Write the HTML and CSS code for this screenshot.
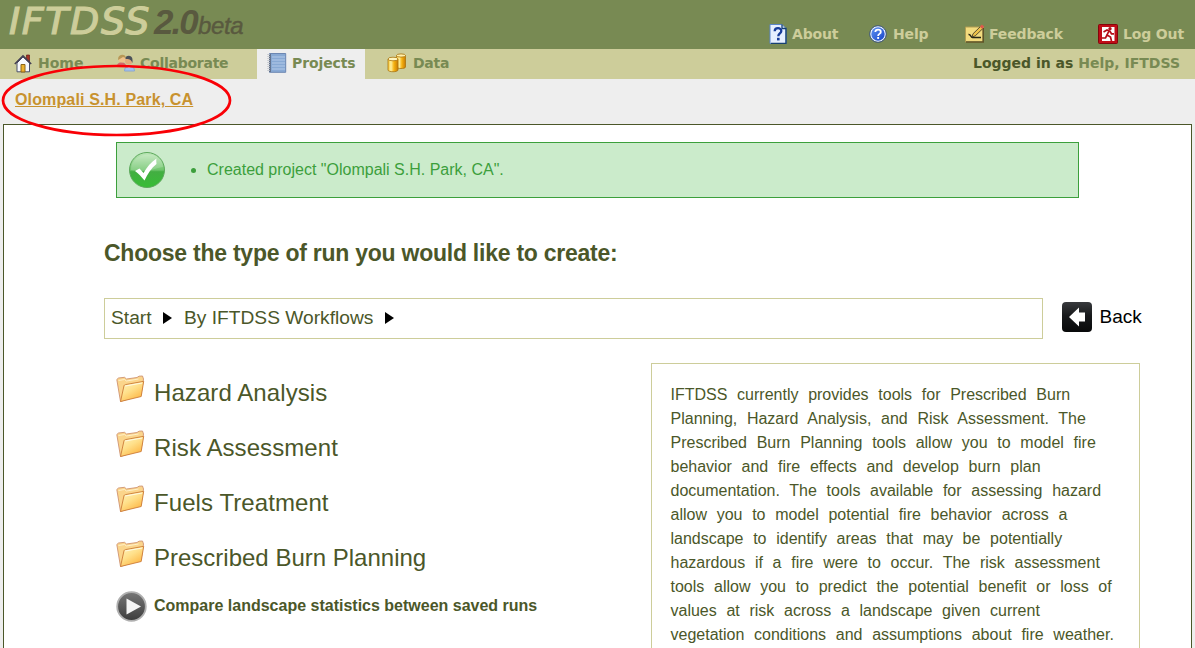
FILE: index.html
```html
<!DOCTYPE html>
<html lang="en">
<head>
<meta charset="utf-8">
<title>IFTDSS 2.0 beta</title>
<link rel="stylesheet" href="styles.css">
</head>
<body>
<svg class="defs" width="0" height="0" aria-hidden="true">
  <defs>
    <linearGradient id="gold" x1="0" y1="0" x2=".7" y2="1"><stop offset="0" stop-color="#fff6c4"/><stop offset=".5" stop-color="#ffe08a"/><stop offset="1" stop-color="#fdb440"/></linearGradient>
    <linearGradient id="barrel" x1="0" y1="0" x2="1" y2="0"><stop offset="0" stop-color="#f8c832"/><stop offset=".3" stop-color="#fff0a0"/><stop offset=".6" stop-color="#f6b210"/><stop offset="1" stop-color="#c77b06"/></linearGradient>
    <linearGradient id="green" x1="0" y1="0" x2="0" y2="1"><stop offset="0" stop-color="#c0e8bb"/><stop offset=".5" stop-color="#6fc56c"/><stop offset=".55" stop-color="#43ae42"/><stop offset="1" stop-color="#37bd35"/></linearGradient>
    <linearGradient id="dark" x1="0" y1="0" x2="0" y2="1"><stop offset="0" stop-color="#383a3d"/><stop offset=".45" stop-color="#17191b"/><stop offset="1" stop-color="#08090a"/></linearGradient>
    <linearGradient id="gray" x1="0" y1="0" x2="0" y2="1"><stop offset="0" stop-color="#777"/><stop offset="1" stop-color="#3c3c3c"/></linearGradient>
    <linearGradient id="blue" x1="0" y1="0" x2="1" y2="1"><stop offset="0" stop-color="#5f92f2"/><stop offset="1" stop-color="#1644c8"/></linearGradient>
    <symbol id="folder" viewBox="0 0 30 28">
      <path d="M.8 4.500 2.500 3l6-.7 2 1.700L21 2.500l2-1.300 3.500-.2 1 3L25 20 4.500 26.500z" fill="#fbd58b" stroke="#cf9370" stroke-width=".9" stroke-linejoin="round"/>
      <path d="m2.500 5.500 6-1 2 1.500 12-2" fill="none" stroke="#fff0c9"/>
      <path d="M8 10.700Q8.300 9.800 9.500 9.600L27.700 6.300 25.200 21.500 4.500 26.500z" fill="url(#gold)" stroke="#cd7c38" stroke-width=".9" stroke-linejoin="round"/>
      <path d="m9.200 11 17-3" stroke="#fffbe2" fill="none"/>
    </symbol>
  </defs>
</svg>

<header class="banner">
  <div class="logo"><span class="logo-name">IFTDSS</span><span class="logo-version">2.0</span><span class="logo-stage">beta</span></div>
  <nav class="tools">
    <a class="tool about"><svg width="18" height="20" viewBox="0 0 18 20"><path d="M1 .5h12l4 4V19.500H1z" fill="#e6efff" stroke="#5b86c9"/><path d="M13 .5v4h4v15H2" fill="none" stroke="#174071" stroke-width="1.300"/><path d="M5.700 7.200c0-4 6.600-4 6.600-.3 0 2.500-3 2.600-3 5.300" fill="none" stroke="#173c9a" stroke-width="2.300"/><rect x="8" y="13.800" width="2.600" height="2.600" fill="#173c9a"/></svg>About</a>
    <a class="tool help"><svg width="18" height="18" viewBox="0 0 18 18"><circle cx="9" cy="9" r="8.300" fill="#e9f0ff" stroke="#375176"/><circle cx="9" cy="9" r="6.700" fill="url(#blue)"/><path d="M6.300 7.100c0-3.500 5.500-3.300 5.500-.2 0 2-2.700 2-2.700 4" fill="none" stroke="#fff" stroke-width="1.800"/><rect x="8.200" y="12" width="1.900" height="1.900" fill="#fff"/></svg>Help</a>
    <a class="tool feedback"><svg width="20" height="19" viewBox="0 0 20 19"><path d="M.5 3h17.700v15H.5z" fill="#f2db7e" stroke="#b09d52"/><path d="M1 18h17.200V4" fill="none" stroke="#5b5127" stroke-width="1.500"/><path d="M3.500 10.500c2.500-.5 2 3 4 3h8.500" fill="none" stroke="#252515" stroke-width="1.500"/><path d="m7 13 1-3.200 7.600-7.400 2.200 2.200-7.600 7.300z" fill="#eec349" stroke="#363024" stroke-width=".8"/><path d="m14.800 2.800 2-2.300 2.500 2-2 2.400z" fill="#dd5a4b"/></svg>Feedback</a>
    <a class="tool logout"><svg width="20" height="20" viewBox="0 0 20 20"><rect x=".5" y=".5" width="19" height="19" rx="1" fill="#c00d17" stroke="#86050b"/><path d="M4 3h12.500v14H4z" fill="#fff"/><circle cx="12" cy="4.800" r="1.700" fill="#b40d17"/><path d="M5.500 8 9 6l3 1.300 1.500 2.500H16M10.800 7.300 9 11l3.500 2 1 4M9 11l-1.500 3H4" fill="none" stroke="#b40d17" stroke-width="1.700"/></svg>Log Out</a>
  </nav>
</header>

<nav class="tabs">
  <a class="tab home"><svg width="18" height="19" viewBox="0 0 18 19"><path d="M12.500 1h3v7h-3z" fill="#a63225" stroke="#642018" stroke-width=".7"/><path d="M3 9 9 3l6.500 6v8.800H3z" fill="#f7f8fc" stroke="#4a506b"/><path d="M.8 10 9 1.800l8.200 8.200" fill="none" stroke="#454053" stroke-width="1.600"/><path d="M7 10.500h4V18H7z" fill="#edb22c" stroke="#8a641a"/></svg>Home</a>
  <a class="tab collaborate"><svg width="20" height="18" viewBox="0 0 20 18"><path d="M1 12c0-5 9-5 9 0v1H1z" fill="#d3686c"/><circle cx="6" cy="5" r="3.600" fill="#efc28c"/><path d="M2.200 6C1 0 10-1 9.800 4L7 3z" fill="#b79857"/><path d="M8.500 17c0-7 10-7 10 0z" fill="#a3c4f0" stroke="#8ba6d0"/><circle cx="12.700" cy="7" r="3.600" fill="#e2ac7c"/><path d="M9.500 5C9 .6 16.800.5 16.500 6v3c-1.500-4-4-4-7-4z" fill="#4a5059"/><path d="m11.500 12 1.800 2 1.700-2" stroke="#fff" fill="none"/></svg>Collaborate</a>
  <a class="tab projects active"><svg width="20" height="20" viewBox="0 0 20 20"><path d="M2.500.5h16.200v18.800H2.500z" fill="#88a9d4" stroke="#6d87b2"/><path d="M5 4h13M5 7h13M5 10h13M5 13h13M5 16h13" stroke="#b4cae9"/><path d="M3 1v18" stroke="#596378" stroke-width="1.500"/><path d="M1.500 1v18" stroke="#c5c9d0" stroke-width="2.500" stroke-dasharray="1 1"/></svg>Projects</a>
  <a class="tab data"><svg width="20" height="20" viewBox="0 0 20 20"><g fill="url(#barrel)" stroke="#a9730e" stroke-width=".8"><path d="M9.500 2.500V14c0 2 9 2 9 0V2.500z"/><ellipse cx="14" cy="2.500" rx="4.500" ry="1.600" fill="#fff0ac"/><path d="M1 6v11c0 2.300 10 2.300 10 0V6z"/><ellipse cx="6" cy="6" rx="5" ry="1.800" fill="#fff5bd"/></g></svg>Data</a>
  <div class="session">Logged in as <span>Help, IFTDSS</span></div>
</nav>

<div class="crumb"><a class="project-link">Olompali S.H. Park, CA</a></div>
<svg class="annotation" width="234" height="76" viewBox="0 0 234 76"><ellipse cx="116.500" cy="37.500" rx="113.500" ry="34.500" fill="none" stroke="#f90006" stroke-width="2.700"/></svg>

<main class="panel">
  <div class="notice">
    <svg width="38" height="38" viewBox="0 0 38 38"><circle cx="19" cy="19" r="17.500" fill="url(#green)" stroke="#5da95c"/><path d="M3 19C3-1 35-1 35 16c-9 1-17 7-32 3z" fill="#fff" opacity=".18"/><path d="m7 20 4.500-2.500 4 4.500C19 16 23 11 28.500 7.500c-.5 2 0 4 0 5.500-5 4-9 10-12 16.500-3-3.500-5.500-6.500-9.500-9.500z" fill="#fff"/></svg>
    <ul><li>Created project "Olompali S.H. Park, CA".</li></ul>
  </div>
  <h1>Choose the type of run you would like to create:</h1>
  <div class="path-row">
    <div class="path"><span class="path-start">Start</span><i></i><span class="path-flow">By IFTDSS Workflows</span><i></i></div>
    <a class="back"><svg width="30" height="30" viewBox="0 0 30 30"><rect width="30" height="30" rx="4" fill="url(#dark)"/><path d="M7 15 17 5.500v5h6v9h-6v5z" fill="#fff"/></svg><span>Back</span></a>
  </div>
  <div class="columns">
    <div class="workflows">
      <a class="flow"><svg width="30" height="28"><use href="#folder"/></svg><span>Hazard Analysis</span></a>
      <a class="flow"><svg width="30" height="28"><use href="#folder"/></svg><span>Risk Assessment</span></a>
      <a class="flow"><svg width="30" height="28"><use href="#folder"/></svg><span>Fuels Treatment</span></a>
      <a class="flow last"><svg width="30" height="28"><use href="#folder"/></svg><span>Prescribed Burn Planning</span></a>
      <a class="compare"><svg width="32" height="32" viewBox="0 0 32 32"><circle cx="15.500" cy="16.500" r="14.300" fill="url(#gray)" stroke="#b0b0b0" stroke-width="1.800"/><path d="M10.500 8.500 25 16.500l-14.500 8z" fill="#f4f4f4"/></svg><span>Compare landscape statistics between saved runs</span></a>
    </div>
    <div class="info">IFTDSS currently provides tools for Prescribed Burn<br>Planning, Hazard Analysis, and Risk Assessment. The<br>Prescribed Burn Planning tools allow you to model fire<br>behavior and fire effects and develop burn plan<br>documentation. The tools available for assessing hazard<br>allow you to model potential fire behavior across a<br>landscape to identify areas that may be potentially<br>hazardous if a fire were to occur. The risk assessment<br>tools allow you to predict the potential benefit or loss of<br>values at risk across a landscape given current<br>vegetation conditions and assumptions about fire weather.</div>
  </div>
</main>
</body>
</html>
```
FILE: styles.css
```css
* { box-sizing: border-box; }
body {
  margin: 0;
  height: 648px;
  overflow: hidden;
  background: #eee;
  color: #4b5729;
  font-family: "Liberation Sans", Arial, sans-serif;
  display: flex;
  flex-direction: column;
  white-space: nowrap;
}
svg { display: block; flex: none; }
.defs { position: absolute; }

.banner {
  flex: 0 0 49px;
  background: #788a53;
  display: flex;
  justify-content: space-between;
}
.logo { display: flex; align-items: baseline; padding-left: 9px; height: 49px; line-height: 42px; font-style: italic; }
.logo-name { font-family: "DejaVu Sans", sans-serif; font-size: 38px; color: #cdcd9a; width: 145px; letter-spacing: 1.6px; -webkit-text-stroke: 1.2px #cdcd9a; }
.logo-version { font-size: 35px; font-weight: bold; color: #59593f; width: 44px; letter-spacing: -2px; }
.logo-stage { font-size: 24px; color: #59593f; letter-spacing: -.4px; -webkit-text-stroke: .4px #59593f; }

.tools { display: flex; align-items: center; padding: 18px 11px 0 0; }
.tool, .tab, .session { font: bold 14px/20px "DejaVu Sans", Verdana, sans-serif; }
.tool { display: flex; align-items: center; color: #cdcd9a; letter-spacing: -.15px; }
.about { width: 100px; gap: 5px; }
.help { width: 96px; gap: 6px; }
.feedback { width: 133px; gap: 4px; }
.logout { width: 86px; gap: 5px; }

.tabs { flex: 0 0 30px; background: #cdcd9a; display: flex; }
.tab { display: flex; align-items: center; color: #788a53; padding-bottom: 2px; letter-spacing: -.25px; }
.home { width: 101px; padding-left: 14px; gap: 6px; letter-spacing: 0; }
.collaborate { width: 156px; padding-left: 15px; gap: 4px; }
.projects { width: 108px; padding-left: 10px; gap: 5px; letter-spacing: -.1px; }
.data { padding-left: 22px; gap: 6px; }
.active { background: #eee; }
.session { margin-left: auto; padding: 4px 15px 0 0; color: #4b5729; }
.session span { color: #788a53; }

.crumb { flex: 0 0 45px; padding: 11px 0 0 15px; font: bold 16px/20px "Liberation Sans", Arial, sans-serif; letter-spacing: .14px; }
.project-link { color: #c8922e; text-decoration: underline; }
.annotation { position: absolute; left: 0; top: 63px; }

.panel {
  flex: 1;
  margin: 0 3px;
  border: 1px solid #4b5729;
  border-bottom: 0;
  background: #fff;
  padding-top: 17px;
}
.notice {
  width: 963px;
  height: 56px;
  margin-left: 112px;
  border: 1px solid #3c9f3c;
  background: #cbebcb;
  color: #3c9f3c;
  display: flex;
  align-items: center;
  padding-left: 11px;
}
.notice ul { margin: 0; padding-left: 41px; font-size: 16px; }
h1 { margin: 40px 0 0 100px; font-size: 23px; line-height: 30px; letter-spacing: -.245px; }

.path-row { display: flex; margin: 30px 0 0 100px; align-items: center; }
.path {
  width: 939px;
  height: 41px;
  border: 1px solid #cdcd9a;
  display: flex;
  align-items: center;
  padding: 0 0 1px 6px;
  font-size: 19.200px;
}
.path i { width: 0; height: 0; border: 6px solid transparent; border-left: 9px solid #000; border-right: 0; }
.path-start { width: 52px; }
.path-start + i { margin-right: 12px; }
.path-flow { width: 201px; }
.back { display: flex; align-items: center; gap: 7.500px; margin: -3px 0 0 19px; font-size: 19px; color: #000; }

.columns { display: flex; margin: 24px 0 0 112px; align-items: flex-start; }
.workflows { width: 535px; padding-top: 2px; }
.flow { display: flex; height: 55px; gap: 8px; padding-top: 9px; font-size: 24px; line-height: 38px; letter-spacing: .08px; }
.flow svg { margin-top: 1px; }
.last { letter-spacing: 0; }
.compare { display: flex; align-items: center; gap: 6px; padding-top: 5px; font-size: 16px; font-weight: bold; }
.info {
  width: 489px;
  border: 1px solid #cdcd9a;
  padding: 19px 0 20px 18.500px;
  font-size: 16px;
  line-height: 24px;
  word-spacing: 5.250px;
}
```
